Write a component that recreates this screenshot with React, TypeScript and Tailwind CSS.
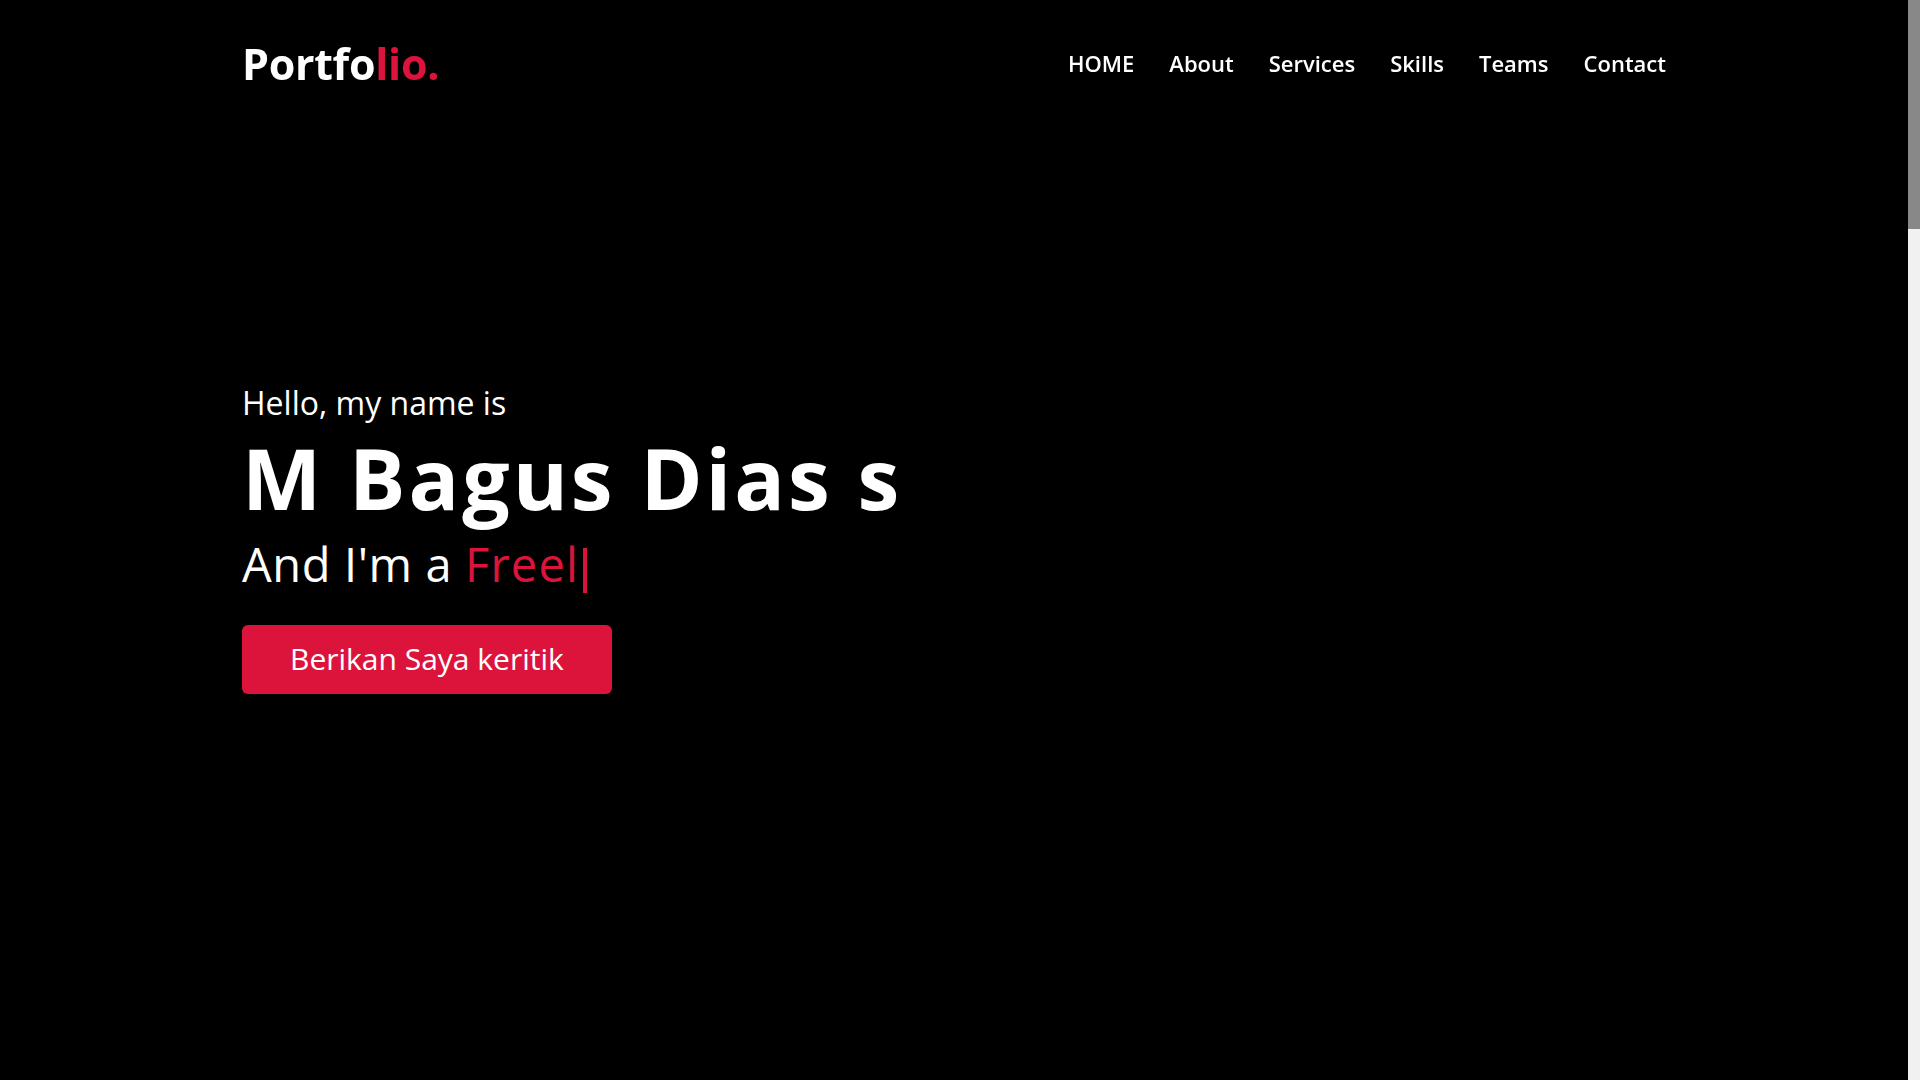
import React from 'react';

const links = ['HOME', 'About', 'Services', 'Skills', 'Teams', 'Contact'];

export default function App() {
  return (
    <div className="min-h-screen bg-black text-white font-['Open_Sans',sans-serif]">
      <header className="fixed top-0 left-0 w-[1908px] h-[126px] z-10">
        <div className="w-[1424px] h-full mx-auto flex items-center justify-between">
          <a href="#" className="text-[43px] font-bold leading-none tracking-[-0.3px]">
            Portfo<span className="text-[#dc143c]">lio.</span>
          </a>
          <nav className="flex items-center gap-[35px]">
            {links.map((l) => (
              <a key={l} href="#" className="text-[22px] font-semibold leading-none">
                {l}
              </a>
            ))}
          </nav>
        </div>
      </header>

      <section className="w-[1908px] h-[1080px] flex items-center">
        <div className="w-[1424px] mx-auto flex flex-col items-start">
          <div className="text-[32px] leading-none">Hello, my name is</div>
          <div className="mt-[17px] text-[84px] font-bold leading-none tracking-[3px]">M Bagus Dias s</div>
          <div className="mt-[21px] text-[47px] leading-none tracking-[0.6px] flex items-end">
            <span className="whitespace-pre">And I'm a </span>
            <span className="text-[#dc143c] tracking-[1.2px]">Freel</span>
            <span className="inline-block w-[4px] h-[45px] mb-[-5px] ml-[4px] bg-[#dc143c]" />
          </div>
          <button className="mt-[37px] h-[69px] px-[48px] bg-[#dc143c] rounded-[6px] text-[30px] leading-none text-white">
            Berikan Saya keritik
          </button>
        </div>
      </section>

      <div className="fixed top-0 right-0 w-[12px] h-[1080px] bg-[#f1f1f1]">
        <div className="w-full h-[229px] bg-[#888888]" />
      </div>
    </div>
  );
}
